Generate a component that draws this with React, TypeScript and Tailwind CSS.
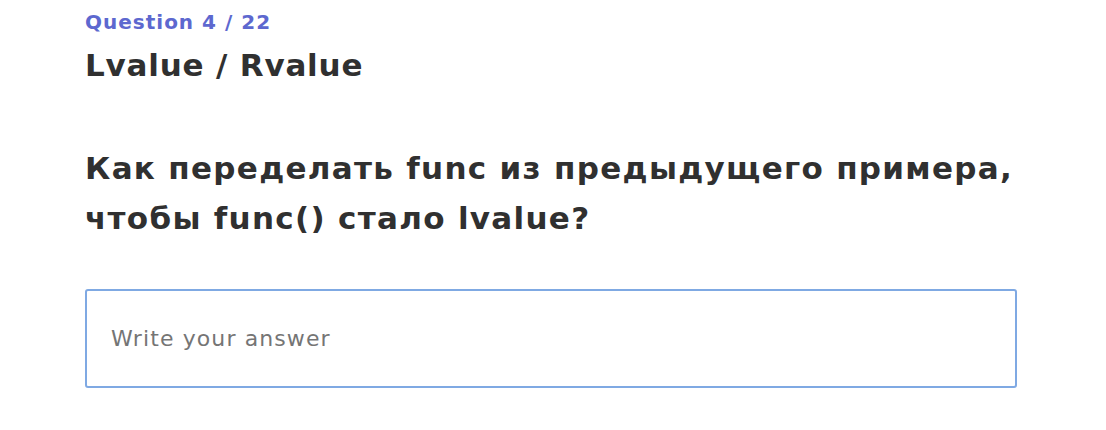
export default function App() {
  return (
    <div className="w-[1106px] h-[430px] bg-white font-['DejaVu_Sans',sans-serif]">
      <div className="ml-[85px] w-[932px] pt-[7px] flex flex-col">
        <p className="text-[20px] leading-[30px] font-semibold tracking-[1px] text-[#5d68cf]">Question 4 / 22</p>
        <h1 className="text-[31px] leading-[56px] font-semibold tracking-[0.8px] text-[#303030]">Lvalue / Rvalue</h1>
        <h2 className="mt-[50px] text-[31px] leading-[50px] font-bold tracking-[1.3px] text-[#303030]">
          Как переделать func из предыдущего примера,
          <br />
          чтобы func() стало lvalue?
        </h2>
        <input
          type="text"
          placeholder="Write your answer"
          className="mt-[46px] h-[99px] w-full rounded-[3px] border-2 border-[#7fa9e3] px-[24px] text-[22px] tracking-[1.1px] text-[#303030] placeholder:text-[#757575] outline-none"
        />
      </div>
    </div>
  );
}
